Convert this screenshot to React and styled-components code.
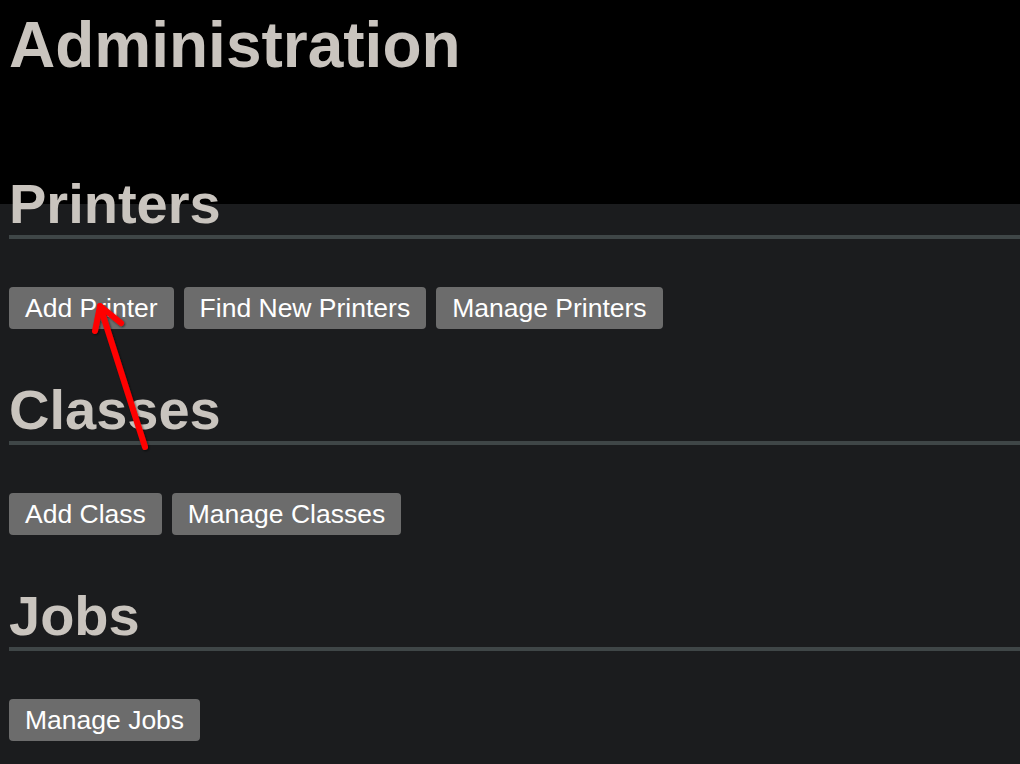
import React from "react";
import styled, { createGlobalStyle } from "styled-components";

const GlobalStyle = createGlobalStyle`
  html, body {
    margin: 0;
    padding: 0;
    background: #1b1c1e;
  }
  body {
    font-family: "Liberation Sans", Arial, sans-serif;
  }
`;

const sections = [
  { title: "Printers", buttons: ["Add Printer", "Find New Printers", "Manage Printers"] },
  { title: "Classes", buttons: ["Add Class", "Manage Classes"] },
  { title: "Jobs", buttons: ["Manage Jobs"] },
];

const App = () => {
  return (
    <Page>
      <GlobalStyle />
      <Title>Administration</Title>
      {sections.map((s) => (
        <Section key={s.title}>
          <Heading>{s.title}</Heading>
          <Buttons>
            {s.buttons.map((b) => (
              <Button key={b}>{b}</Button>
            ))}
          </Buttons>
        </Section>
      ))}
      <Arrow width="1020" height="764" viewBox="0 0 1020 764">
        <defs>
          <filter id="sh" x="-20%" y="-20%" width="140%" height="140%">
            <feDropShadow dx="1" dy="1" stdDeviation="1" floodColor="#000" floodOpacity="0.6" />
          </filter>
        </defs>
        <g
          stroke="#ff0000"
          strokeWidth="6"
          strokeLinecap="round"
          strokeLinejoin="round"
          fill="none"
          filter="url(#sh)"
        >
          <path d="M145 447 L100 306" />
          <path d="M95 331 L100 306 L121 323" />
        </g>
      </Arrow>
    </Page>
  );
};

export default App;

const Page = styled.div`
  position: relative;
  width: 1020px;
  height: 764px;
  overflow: hidden;
  padding: 0 0 0 9px;
  box-sizing: border-box;
  background: linear-gradient(#000 0, #000 204px, #1b1c1e 204px);
`;

const Title = styled.h1`
  margin: 0;
  padding-top: 8px;
  font-size: 64px;
  line-height: 74px;
  font-weight: bold;
  color: #c9c4be;
  height: 165px;
`;

const Section = styled.section`
  display: flex;
  flex-direction: column;
  height: 206px;
`;

const Heading = styled.h2`
  margin: 0;
  font-size: 56px;
  line-height: 62px;
  font-weight: bold;
  color: #c9c4be;
  border-bottom: 4px solid #3f4647;
`;

const Buttons = styled.div`
  display: flex;
  gap: 10px;
  margin-top: 48px;
`;

const Button = styled.button`
  font-family: "Liberation Sans", Arial, sans-serif;
  font-size: 26.5px;
  line-height: 30px;
  color: #ffffff;
  background: #6c6c6c;
  border: none;
  border-radius: 4px;
  padding: 6px 16px;
  cursor: pointer;
`;

const Arrow = styled.svg`
  position: absolute;
  top: 0;
  left: 0;
  pointer-events: none;
`;
